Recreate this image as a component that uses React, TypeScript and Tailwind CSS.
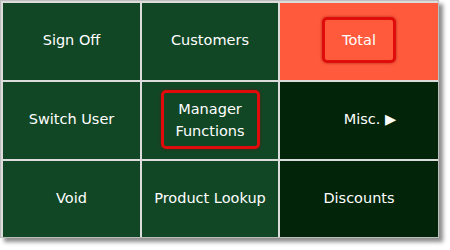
import React from "react";

const font = { fontFamily: '"DejaVu Sans", Verdana, sans-serif' };

function Cell({ children, className = "" }: { children: React.ReactNode; className?: string }) {
  return (
    <div className={`flex items-center justify-center text-white text-[14.5px] leading-[20px] text-center pb-[3px] ${className}`}>
      {children}
    </div>
  );
}

export default function App() {
  return (
    <div className="w-[450px] h-[250px] bg-white" style={font}>
      <div className="grid grid-cols-[137px_136px_158px] grid-rows-[77px_77px_76px] gap-[2px] p-[2px] bg-[#dcdcdc] border border-[#bdbdbd] w-[439px] h-[238px] shadow-[4px_4px_4px_rgba(0,0,0,0.45)]">
        <Cell className="bg-[#124726]">Sign Off</Cell>
        <Cell className="bg-[#124726]">Customers</Cell>
        <Cell className="bg-[#ff5a3c]">
          <div className="w-[74px] h-[46px] flex items-center justify-center border-[3px] border-[#e00b0b] rounded-[5px] shadow-[0_0_3px_rgba(120,0,0,0.6)]">
            Total
          </div>
        </Cell>
        <Cell className="bg-[#124726]">Switch User</Cell>
        <Cell className="bg-[#124726] pt-[1px]">
          <div className="w-[99px] h-[59px] flex items-center justify-center border-[3px] border-[#e00b0b] rounded-[5px] shadow-[0_0_3px_rgba(120,0,0,0.6)] leading-[22px]">
            Manager<br />Functions
          </div>
        </Cell>
        <Cell className="bg-[#022408] pl-[22px]">Misc. ▶</Cell>
        <Cell className="bg-[#124726]">Void</Cell>
        <Cell className="bg-[#124726]">Product Lookup</Cell>
        <Cell className="bg-[#022408]">Discounts</Cell>
      </div>
    </div>
  );
}
